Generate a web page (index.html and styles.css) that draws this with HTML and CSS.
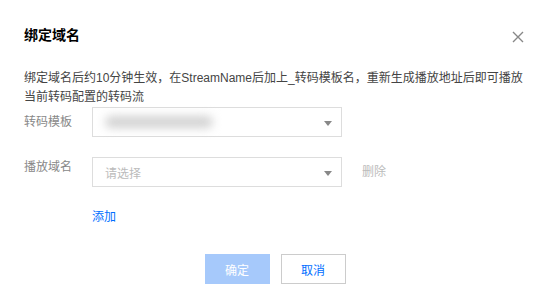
FILE: index.html
```html
<!DOCTYPE html>
<html lang="zh-CN">
<head>
    <meta charset="UTF-8">
    <title>绑定域名</title>
    <link rel="stylesheet" href="styles.css">
</head>
<body>
    <div class="dialog">
        <div class="dialog-header">
            <h3 class="dialog-title">绑定域名</h3>
            <span class="close" role="button" aria-label="关闭">
                <svg width="12" height="12" viewBox="0 0 12 12"><path d="M1 1L11 11M11 1L1 11" stroke="#888" stroke-width="1.4" fill="none"/></svg>
            </span>
        </div>
        <p class="desc">绑定域名后约10分钟生效，在StreamName后加上_转码模板名，重新生成播放地址后即可播放当前转码配置的转码流</p>
        <div class="form">
            <div class="form-row">
                <label class="field-label">转码模板</label>
                <div class="select">
                    <span class="blurred"></span>
                    <span class="arrow"></span>
                </div>
            </div>
            <div class="form-row">
                <label class="field-label top">播放域名</label>
                <div class="select">
                    <span class="placeholder">请选择</span>
                    <span class="arrow"></span>
                </div>
                <span class="remove">删除</span>
            </div>
            <div class="form-row add-row">
                <a class="link" href="#">添加</a>
            </div>
        </div>
        <div class="dialog-footer">
            <button class="btn btn-primary" disabled>确定</button>
            <button class="btn">取消</button>
        </div>
    </div>
</body>
</html>
```

FILE: styles.css
```css
body {
    margin: 0;
    padding: 0;
    background-color: #fff;
    font-family: "Liberation Sans", "Noto Sans CJK SC", sans-serif;
    font-size: 12px;
    color: #444;
}
.dialog {
    width: 549px;
    height: 301px;
    box-sizing: border-box;
    padding: 25px 24px 0 24px;
}
.dialog-header {
    display: flex;
    justify-content: space-between;
    align-items: center;
    height: 20px;
}
.dialog-title {
    margin: 0;
    font-size: 14px;
    font-weight: bold;
    line-height: 20px;
    color: #000;
}
.close {
    display: flex;
    margin-right: 1px;
    margin-top: 4px;
    cursor: pointer;
}
.desc {
    margin: 24px 0 0 0;
    line-height: 19px;
    color: #444;
}
.form {
    margin-top: 0;
}
.form-row {
    display: flex;
    align-items: flex-start;
    margin-bottom: 20px;
}
.field-label {
    width: 68px;
    flex-shrink: 0;
    color: #888;
    line-height: 18px;
    padding-top: 6px;
}
.field-label.top {
    padding-top: 1px;
}
.select {
    position: relative;
    width: 250px;
    height: 30px;
    box-sizing: border-box;
    border: 1px solid #ddd;
    display: flex;
    align-items: center;
    padding: 0 12px;
}
.blurred {
    display: block;
    width: 108px;
    height: 12px;
    border-radius: 6px;
    background-color: #d2d2d2;
    filter: blur(5px);
}
.placeholder {
    color: #bbb;
}
.arrow {
    position: absolute;
    right: 9px;
    top: 13px;
    width: 0;
    height: 0;
    border-left: 4px solid transparent;
    border-right: 4px solid transparent;
    border-top: 5px solid #888;
}
.remove {
    margin-left: 20px;
    line-height: 30px;
    color: #bbb;
}
.add-row {
    margin: 21px 0 0 68px;
}
.link {
    color: #006eff;
    text-decoration: none;
    line-height: 18px;
}
.dialog-footer {
    display: flex;
    justify-content: center;
    gap: 11px;
    margin-top: 28px;
    padding-left: 1px;
}
.btn {
    width: 65px;
    height: 30px;
    box-sizing: border-box;
    border: 1px solid #ccc;
    background-color: #fff;
    color: #006eff;
    font-family: inherit;
    font-size: 12px;
    cursor: pointer;
}
.btn-primary {
    border-color: #a6c9fb;
    background-color: #a6c9fb;
    color: #fff;
}
```
